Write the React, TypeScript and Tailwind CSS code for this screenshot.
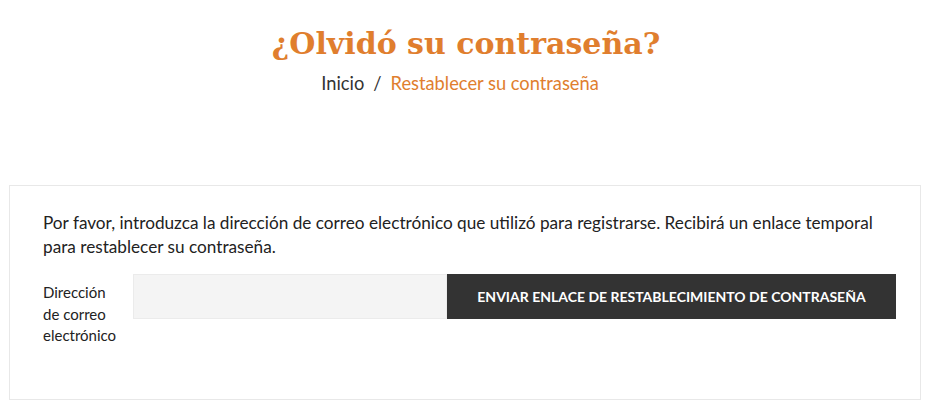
export default function App() {
  return (
    <div className="w-[932px] h-[417px] bg-white overflow-hidden" style={{ fontFamily: '"Lato", "Noto Sans", sans-serif' }}>
      <div className="flex flex-col items-center pt-[24px]">
        <h1 className="text-[30px] leading-[40px] font-bold text-[#e07e2e]" style={{ fontFamily: '"DejaVu Serif", serif' }}>
          ¿Olvidó su contraseña?
        </h1>
        <div className="mt-[6px] pr-[12px] flex items-center gap-[9px] text-[18.3px] leading-[26px]">
          <span className="text-[#333]">Inicio</span>
          <span className="text-[#333]">/</span>
          <span className="text-[#e07e2e]">Restablecer su contraseña</span>
        </div>
      </div>
      <div className="ml-[9px] w-[912px] mt-[89px] h-[215px] border border-[#e8e8e8] px-[33px] pt-[25px]">
        <p className="w-[853px] text-[17.2px] leading-[24px] text-[#222]">
          Por favor, introduzca la dirección de correo electrónico que utilizó para registrarse. Recibirá un enlace temporal para restablecer su contraseña.
        </p>
        <div className="mt-[15px] flex items-start">
          <label className="w-[90px] shrink-0 pr-[10px] pt-[8px] text-[15px] leading-[21.5px] text-[#222]">Dirección de correo electrónico</label>
          <input className="h-[45px] w-[314px] shrink-0 bg-[#f4f4f4] border border-[#ebebeb] outline-none" />
          <button className="h-[45px] w-[449px] shrink-0 bg-[#333333] text-white text-[14px] font-bold uppercase">
            Enviar enlace de restablecimiento de contraseña
          </button>
        </div>
      </div>
    </div>
  );
}
